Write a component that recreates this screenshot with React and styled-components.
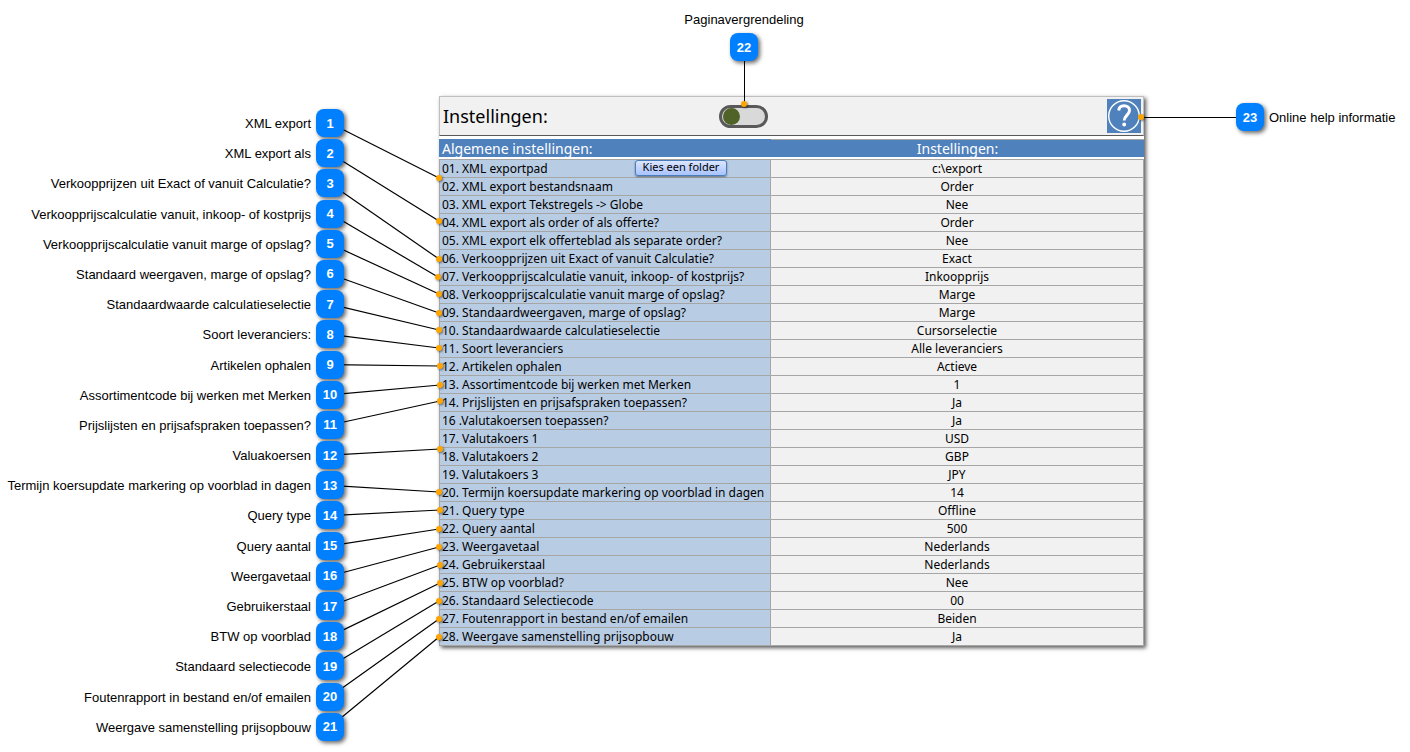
import React, { useState } from 'react';
import styled, { createGlobalStyle } from 'styled-components';

const GlobalStyle = createGlobalStyle`
  * {
    box-sizing: border-box;
  }

  body {
    margin: 0;
    background: #ffffff;
    color: #000000;
    font-family: 'Liberation Sans', Arial, sans-serif;
  }
`;

// y = height of the end point, measured from the centre of the first badge
const callouts = [
  { label: 'XML export', x: 95, y: 55 },
  { label: 'XML export als', x: 95, y: 98 },
  { label: 'Verkoopprijzen uit Exact of vanuit Calculatie?', x: 95, y: 136 },
  { label: 'Verkoopprijscalculatie vanuit, inkoop- of kostprijs', x: 94, y: 154 },
  { label: 'Verkoopprijscalculatie vanuit marge of opslag?', x: 95, y: 171 },
  { label: 'Standaard weergaven, marge of opslag?', x: 95, y: 190 },
  { label: 'Standaardwaarde calculatieselectie', x: 95, y: 207 },
  { label: 'Soort leveranciers:', x: 95, y: 225 },
  { label: 'Artikelen ophalen', x: 96, y: 243 },
  { label: 'Assortimentcode bij werken met Merken', x: 96, y: 262 },
  { label: 'Prijslijsten en prijsafspraken toepassen?', x: 96, y: 278 },
  { label: 'Valuakoersen', x: 96, y: 326 },
  { label: 'Termijn koersupdate markering op voorblad in dagen', x: 95, y: 369 },
  { label: 'Query type', x: 96, y: 387 },
  { label: 'Query aantal', x: 95, y: 406 },
  { label: 'Weergavetaal', x: 95, y: 424 },
  { label: 'Gebruikerstaal', x: 96, y: 442 },
  { label: 'BTW op voorblad', x: 96, y: 460 },
  { label: 'Standaard selectiecode', x: 95, y: 478 },
  { label: 'Foutenrapport in bestand en/of emailen', x: 95, y: 496 },
  { label: 'Weergave samenstelling prijsopbouw', x: 95, y: 514 },
];

const settings = [
  ['01. XML exportpad', 'c:\\export'],
  ['02. XML export bestandsnaam', 'Order'],
  ['03. XML export Tekstregels -> Globe', 'Nee'],
  ['04. XML export als order of als offerte?', 'Order'],
  ['05. XML export elk offerteblad als separate order?', 'Nee'],
  ['06. Verkoopprijzen uit Exact of vanuit Calculatie?', 'Exact'],
  ['07. Verkoopprijscalculatie vanuit, inkoop- of kostprijs?', 'Inkoopprijs'],
  ['08. Verkoopprijscalculatie vanuit marge of opslag?', 'Marge'],
  ['09. Standaardweergaven, marge of opslag?', 'Marge'],
  ['10. Standaardwaarde calculatieselectie', 'Cursorselectie'],
  ['11. Soort leveranciers', 'Alle leveranciers'],
  ['12. Artikelen ophalen', 'Actieve'],
  ['13. Assortimentcode bij werken met Merken', '1'],
  ['14. Prijslijsten en prijsafspraken toepassen?', 'Ja'],
  ['16 .Valutakoersen toepassen?', 'Ja'],
  ['17. Valutakoers 1', 'USD'],
  ['18. Valutakoers 2', 'GBP'],
  ['19. Valutakoers 3', 'JPY'],
  ['20. Termijn koersupdate markering op voorblad in dagen', '14'],
  ['21. Query type', 'Offline'],
  ['22. Query aantal', '500'],
  ['23. Weergavetaal', 'Nederlands'],
  ['24. Gebruikerstaal', 'Nederlands'],
  ['25. BTW op voorblad?', 'Nee'],
  ['26. Standaard Selectiecode', '00'],
  ['27. Foutenrapport in bestand en/of emailen', 'Beiden'],
  ['28. Weergave samenstelling prijsopbouw', 'Ja'],
];

const Page = styled.main`
  display: grid;
  grid-template-columns: 344px 95px minmax(640px, 1fr) 266px;
  min-height: 100vh;
`;

const CalloutList = styled.ol`
  list-style: none;
  margin: 0;
  padding: 109px 0 11px;
  display: flex;
  flex-direction: column;
  justify-content: space-between;
  position: relative;
  z-index: 2;
`;

const Callout = styled.li`
  display: flex;
  align-items: center;
  justify-content: flex-end;
  gap: 5px;
`;

const CalloutLabel = styled.span`
  padding-top: 2px;
  font-size: 13px;
  line-height: 18px;
  white-space: nowrap;
`;

const Badge = styled.span`
  width: 28px;
  height: 28px;
  flex-shrink: 0;
  display: flex;
  align-items: center;
  justify-content: center;
  border-radius: 8px;
  background: #0080ff;
  color: #ffffff;
  font-size: 13px;
  font-weight: bold;
  box-shadow: 2px 2px 4px rgba(0, 0, 0, 0.6);
`;

const ConnectorColumn = styled.div`
  display: flex;
  padding: 123px 0 25px;
  position: relative;
  z-index: 1;
`;

const Connectors = styled.svg`
  display: block;
  width: 100%;
  height: auto;
  overflow: visible;

  line {
    stroke: #000000;
    stroke-width: 1.2;
  }
`;

const Dot = styled.circle`
  fill: #ffa500;
  filter: drop-shadow(1px 1px 1px rgba(0, 0, 0, 0.5));
`;

const Content = styled.div`
  display: flex;
  flex-direction: column;
`;

const TopCallout = styled.div`
  width: 610px;
  height: 96px;
  padding-top: 9px;
  display: flex;
  flex-direction: column;
  align-items: center;
  gap: 4px;
`;

const TopConnector = styled.svg`
  display: block;
  width: 10px;
  height: 39px;
  margin-top: -4px;
  overflow: visible;
  position: relative;
  z-index: 1;
`;

const Panel = styled.section`
  background: #ffffff;
  box-shadow: 2px 2px 4px rgba(0, 0, 0, 0.65);
  font-family: 'Noto Sans', Calibri, sans-serif;
`;

const PanelHeader = styled.header`
  display: grid;
  grid-template-columns: 279px 50px 1fr;
  align-items: center;
  height: 40px;
  margin-bottom: 3px;
  padding-right: 2px;
  background: #f1f1f1;
  border: 1px solid #bfbfbf;
  border-bottom-color: #595959;
`;

const Title = styled.h1`
  margin: 0;
  padding-left: 3px;
  font-size: 18px;
  line-height: 24px;
  font-weight: normal;
`;

const Toggle = styled.button`
  width: 49px;
  height: 23px;
  padding: 0 1px;
  display: flex;
  align-items: center;
  justify-content: ${props => props.$on ? 'flex-end' : 'flex-start'};
  border: 3px solid #595959;
  border-radius: 12px;
  background: #d9d9d9;
  cursor: pointer;
`;

const Knob = styled.span`
  width: 17px;
  height: 17px;
  border-radius: 50%;
  background: #4f6228;
`;

const HelpButton = styled.button`
  justify-self: end;
  width: 34px;
  height: 34px;
  padding: 0;
  border: none;
  background: #4f81bd;
  cursor: pointer;

  svg {
    display: block;
  }
`;

const Table = styled.table`
  width: 100%;
  table-layout: fixed;
  border-collapse: separate;
  border-spacing: 0;
  font-size: 12px;
  line-height: 16px;
`;

const HeadCell = styled.th`
  width: ${props => props.$width};
  height: 20px;
  padding: 1px 3px 0;
  background: #4f81bd;
  background-clip: padding-box;
  border-bottom: 2px solid #ffffff;
  box-shadow: ${props => props.$topLine ? 'inset 0 1px 0 #a6a6a6' : 'none'};
  color: #ffffff;
  font-size: 14px;
  line-height: 17px;
  font-weight: normal;
  text-align: ${props => props.$align};
`;

const Row = styled.tr`
  & > * {
    height: 18px;
    padding: 1px 2px 0;
    border-bottom: 1px solid #a6a6a6;
    border-right: 1px solid #a6a6a6;
    white-space: nowrap;
  }

  &:first-child > * {
    height: 19px;
    border-top: 1px solid #a6a6a6;
  }
`;

const NameCell = styled.th`
  position: relative;
  background: #b8cce4;
  background-clip: padding-box;
  border-left: 1px solid #a6a6a6;
  font-weight: normal;
  text-align: left;
`;

const ValueCell = styled.td`
  background: #f1f1f1;
  text-align: center;
`;

const FolderButton = styled.button`
  position: absolute;
  top: 0;
  right: 43px;
  width: 92px;
  height: 16px;
  padding: 0 0 2px;
  border: 1px solid #4a7ebb;
  border-radius: 3px;
  background: linear-gradient(#dbe5ff, #a9c3ff);
  box-shadow: 0 1px 2px rgba(0, 0, 0, 0.45);
  font-family: inherit;
  font-size: 11px;
  line-height: 12px;
  color: #000000;
  cursor: pointer;
`;

const RightCallout = styled.div`
  display: flex;
  align-items: center;
  align-self: start;
  gap: 5px;
  padding-top: 103px;
`;

const RightConnector = styled.svg`
  display: block;
  width: 92px;
  height: 10px;
  margin-right: -5px;
  overflow: visible;
  position: relative;
`;

const App = () => {
  const [locked, setLocked] = useState(false);

  return (
    <>
      <GlobalStyle />
      <Page>
        <CalloutList>
          {callouts.map((item, index) => (
            <Callout key={item.label}>
              <CalloutLabel>{item.label}</CalloutLabel>
              <Badge>{index + 1}</Badge>
            </Callout>
          ))}
        </CalloutList>

        {/* Lines from the badges to the rows */}
        <ConnectorColumn>
          <Connectors aria-hidden="true">
            {callouts.map((item, index) => (
              <g key={item.label}>
                <line x1={-14} y1={`${index * 5}%`} x2={item.x} y2={item.y} />
                <Dot cx={item.x} cy={item.y} r={3} />
              </g>
            ))}
          </Connectors>
        </ConnectorColumn>

        <Content>
          <TopCallout>
            <CalloutLabel>Paginavergrendeling</CalloutLabel>
            <Badge>22</Badge>
            <TopConnector aria-hidden="true">
              <path d="M5.5 0V43" stroke="#000000" />
              <Dot cx={5} cy={43} r={3} />
            </TopConnector>
          </TopCallout>

          <Panel>
            <PanelHeader>
              <Title>Instellingen:</Title>
              <Toggle
                type="button"
                role="switch"
                aria-checked={locked}
                aria-label="Paginavergrendeling"
                $on={locked}
                onClick={() => setLocked(!locked)}
              >
                <Knob />
              </Toggle>
              <HelpButton type="button" aria-label="Online help informatie">
                <svg width="34" height="34" viewBox="0 0 34 34" fill="none" stroke="#ffffff">
                  <circle cx="17" cy="17" r="15.3" strokeWidth="1.4" />
                  <path d="M11.7 11.5C12 8.300 14 6.800 17 6.800s5.500 1.700 5.500 4.800c0 4.300-5.300 4.900-5.300 10" strokeWidth="3" />
                  <circle cx="17.200" cy="25.500" r="1.900" fill="#ffffff" stroke="none" />
                </svg>
              </HelpButton>
            </PanelHeader>

            <Table>
              <thead>
                <tr>
                  <HeadCell scope="col" $width="332px" $align="left">Algemene instellingen:</HeadCell>
                  <HeadCell scope="col" $width="auto" $align="center" $topLine>Instellingen:</HeadCell>
                </tr>
              </thead>
              <tbody>
                {settings.map(([name, value], index) => (
                  <Row key={name}>
                    <NameCell scope="row">
                      {name}
                      {index === 0 && <FolderButton type="button">Kies een folder</FolderButton>}
                    </NameCell>
                    <ValueCell>{value}</ValueCell>
                  </Row>
                ))}
              </tbody>
            </Table>
          </Panel>
        </Content>

        <RightCallout>
          <RightConnector aria-hidden="true">
            <path d="M-3 5.500H92" stroke="#000000" />
            <Dot cx={-3} cy={5} r={3} />
          </RightConnector>
          <Badge>23</Badge>
          <CalloutLabel>Online help informatie</CalloutLabel>
        </RightCallout>
      </Page>
    </>
  );
};

export default App;
